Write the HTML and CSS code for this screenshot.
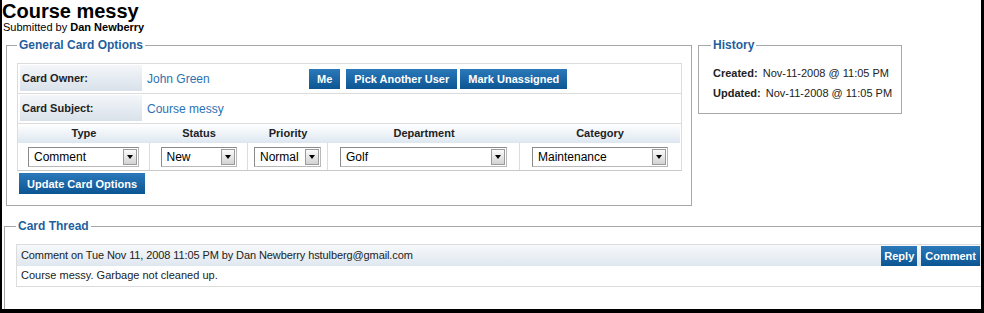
FILE: index.html
```html
<!DOCTYPE html>
<html>
<head>
<meta charset="utf-8">
<title>Course messy</title>
<link rel="stylesheet" href="styles.css">
</head>
<body>
<div class="frame">
  <h1 class="title">Course messy</h1>
  <div class="byline">Submitted by <b>Dan Newberry</b></div>

  <div class="top-row">
    <fieldset class="box general">
      <legend class="box-legend">General Card Options</legend>
      <div class="info">
        <div class="info-row">
          <div class="info-label">Card Owner:</div>
          <div class="info-value">John Green</div>
          <div class="info-actions">
            <button class="btn btn-me">Me</button>
            <button class="btn btn-pick">Pick Another User</button>
            <button class="btn">Mark Unassigned</button>
          </div>
        </div>
        <div class="info-row">
          <div class="info-label">Card Subject:</div>
          <div class="info-value">Course messy</div>
          <div class="info-actions"></div>
        </div>
        <div class="opt-grid">
          <div class="opt-head">Type</div>
          <div class="opt-head">Status</div>
          <div class="opt-head">Priority</div>
          <div class="opt-head">Department</div>
          <div class="opt-head">Category</div>

          <div class="opt-cell">
            <div class="select sel-type"><span class="select-text">Comment</span><span class="select-arrow"><i class="tri"></i></span></div>
          </div>
          <div class="opt-cell">
            <div class="select sel-status"><span class="select-text">New</span><span class="select-arrow"><i class="tri"></i></span></div>
          </div>
          <div class="opt-cell">
            <div class="select sel-priority"><span class="select-text">Normal</span><span class="select-arrow"><i class="tri"></i></span></div>
          </div>
          <div class="opt-cell">
            <div class="select sel-dept"><span class="select-text">Golf</span><span class="select-arrow"><i class="tri"></i></span></div>
          </div>
          <div class="opt-cell last">
            <div class="select sel-cat"><span class="select-text">Maintenance</span><span class="select-arrow"><i class="tri"></i></span></div>
          </div>
        </div>
      </div>
      <button class="btn btn-update">Update Card Options</button>
    </fieldset>

    <fieldset class="box history">
      <legend class="box-legend">History</legend>
      <div class="hist-row"><b>Created:</b> Nov-11-2008 @ 11:05 PM</div>
      <div class="hist-row"><b>Updated:</b> Nov-11-2008 @ 11:05 PM</div>
    </fieldset>
  </div>

  <fieldset class="box thread">
    <legend class="box-legend">Card Thread</legend>
    <div class="post">
      <div class="post-head">
        <span class="post-meta">Comment on Tue Nov 11, 2008 11:05 PM by Dan Newberry hstulberg@gmail.com</span>
        <span class="post-actions">
          <button class="btn btn-small">Reply</button>
          <button class="btn btn-small btn-comment">Comment</button>
        </span>
      </div>
      <div class="post-body">Course messy. Garbage not cleaned up.</div>
    </div>
  </fieldset>
</div>
</body>
</html>
```

FILE: styles.css
```css
html, body {
  margin: 0;
  padding: 0;
  background: #000;
}

body {
  font-family: "Liberation Sans", Arial, sans-serif;
  font-size: 11px;
  color: #222;
}

.frame {
  width: 979px;
  height: 309px;
  margin-left: 2px;
  background: #fff;
  overflow: hidden;
}

.title {
  margin: 2px 0 0 0;
  font-size: 20px;
  line-height: 19px;
  font-weight: bold;
  color: #000;
}

.byline {
  line-height: 13px;
  color: #000;
  padding-left: 1px;
}

.top-row {
  display: flex;
  align-items: flex-start;
  margin-top: 4px;
}

.box {
  margin: 0;
  border: 1px solid #a7a7a7;
  padding: 11px 9px 11px 10px;
  min-width: 0;
  box-sizing: border-box;
}

.box-legend {
  padding: 0 2px;
  font-size: 12px;
  line-height: 14px;
  font-weight: bold;
  color: #1f5f9e;
}

.box.general {
  width: 686px;
  margin-left: 4px;
}

.box.history {
  width: 204px;
  margin-left: 6px;
  padding: 11px 8px 10px 12px;
}

.hist-row {
  line-height: 20px;
  padding-left: 2px;
  color: #222;
}

.hist-row b {
  margin-right: 2px;
}

/* info table */
.info {
  border: 1px solid #dcdcdc;
  border-bottom-color: #c8c8c8;
}

.info-row {
  display: grid;
  grid-template-columns: 127px 164px 1fr;
  height: 29px;
  border-bottom: 1px solid #dcdcdc;
}

.info-label {
  margin: 1px 3px 2px 2px;
  padding-left: 2px;
  display: flex;
  align-items: center;
  font-weight: bold;
  color: #222;
  background: linear-gradient(#f4f6f9, #d8e1ea);
}

.info-value {
  display: flex;
  align-items: center;
  padding-left: 2px;
  font-size: 12px;
  color: #2b72b2;
}

.info-actions {
  display: flex;
  align-items: center;
}

.btn {
  font-family: "Liberation Sans", Arial, sans-serif;
  font-size: 11px;
  font-weight: bold;
  color: #fff;
  height: 20px;
  padding: 0 8px;
  margin: 0;
  border: 0;
  background: linear-gradient(#2b79ba, #0c5593);
  cursor: pointer;
}

.btn-me {
  margin-right: 6px;
}

.btn-pick {
  margin-right: 3px;
}

.btn.btn-update {
  display: block;
  height: 21px;
  margin: 2px 0 0 2px;
}

.opt-grid {
  display: grid;
  grid-template-columns: 132px 98px 80px 192px 160px;
}

.opt-head {
  height: 19px;
  line-height: 19px;
  text-align: center;
  font-weight: bold;
  color: #222;
  background: linear-gradient(#ffffff, #dde7f0);
}

.opt-cell {
  height: 27px;
  box-sizing: border-box;
  padding-top: 4px;
  display: flex;
  justify-content: center;
  align-items: flex-start;
  border-right: 1px solid #dcdcdc;
}

.opt-cell.last {
  border-right: 0;
}

.select {
  display: flex;
  height: 20px;
  box-sizing: border-box;
  border: 1px solid #8a8a8a;
  border-right-color: #b8b8b8;
  border-bottom-color: #b8b8b8;
  padding: 1px;
  background: #fff;
}

.select-text {
  flex: 1;
  font-size: 12px;
  line-height: 16px;
  padding-left: 4px;
  color: #000;
  white-space: nowrap;
}

.select-arrow {
  width: 14px;
  box-sizing: border-box;
  border: 1px solid #9a9a9a;
  background: linear-gradient(#fbfbfb, #d2d2d2);
  display: flex;
  align-items: center;
  justify-content: center;
}

.tri {
  width: 0;
  height: 0;
  border-left: 3px solid transparent;
  border-right: 3px solid transparent;
  border-top: 4px solid #000;
}

.sel-type { width: 111px; }
.sel-status { width: 76px; }
.sel-priority { width: 67px; }
.sel-dept { width: 167px; }
.sel-cat { width: 136px; }

/* thread */
.box.thread {
  margin: 13px -12px 0 2px;
  padding: 11px 10px 60px 11px;
}

.post {
  border: 1px solid #dcdcdc;
}

.post-head {
  height: 21px;
  display: flex;
  align-items: flex-start;
  justify-content: space-between;
  padding: 0 1px 0 4px;
  background: linear-gradient(#f7f9fb, #dfe7ef);
}

.post-meta {
  line-height: 21px;
  color: #222;
  letter-spacing: -0.1px;
}

.post-actions {
  display: flex;
  padding-top: 1px;
}

.btn.btn-small {
  padding: 0 3px;
}

.btn.btn-comment {
  margin-left: 4px;
  padding: 0 4px;
}

.post-body {
  height: 20px;
  box-sizing: border-box;
  padding: 1px 4px 3px;
  line-height: 16px;
  color: #222;
}
```
